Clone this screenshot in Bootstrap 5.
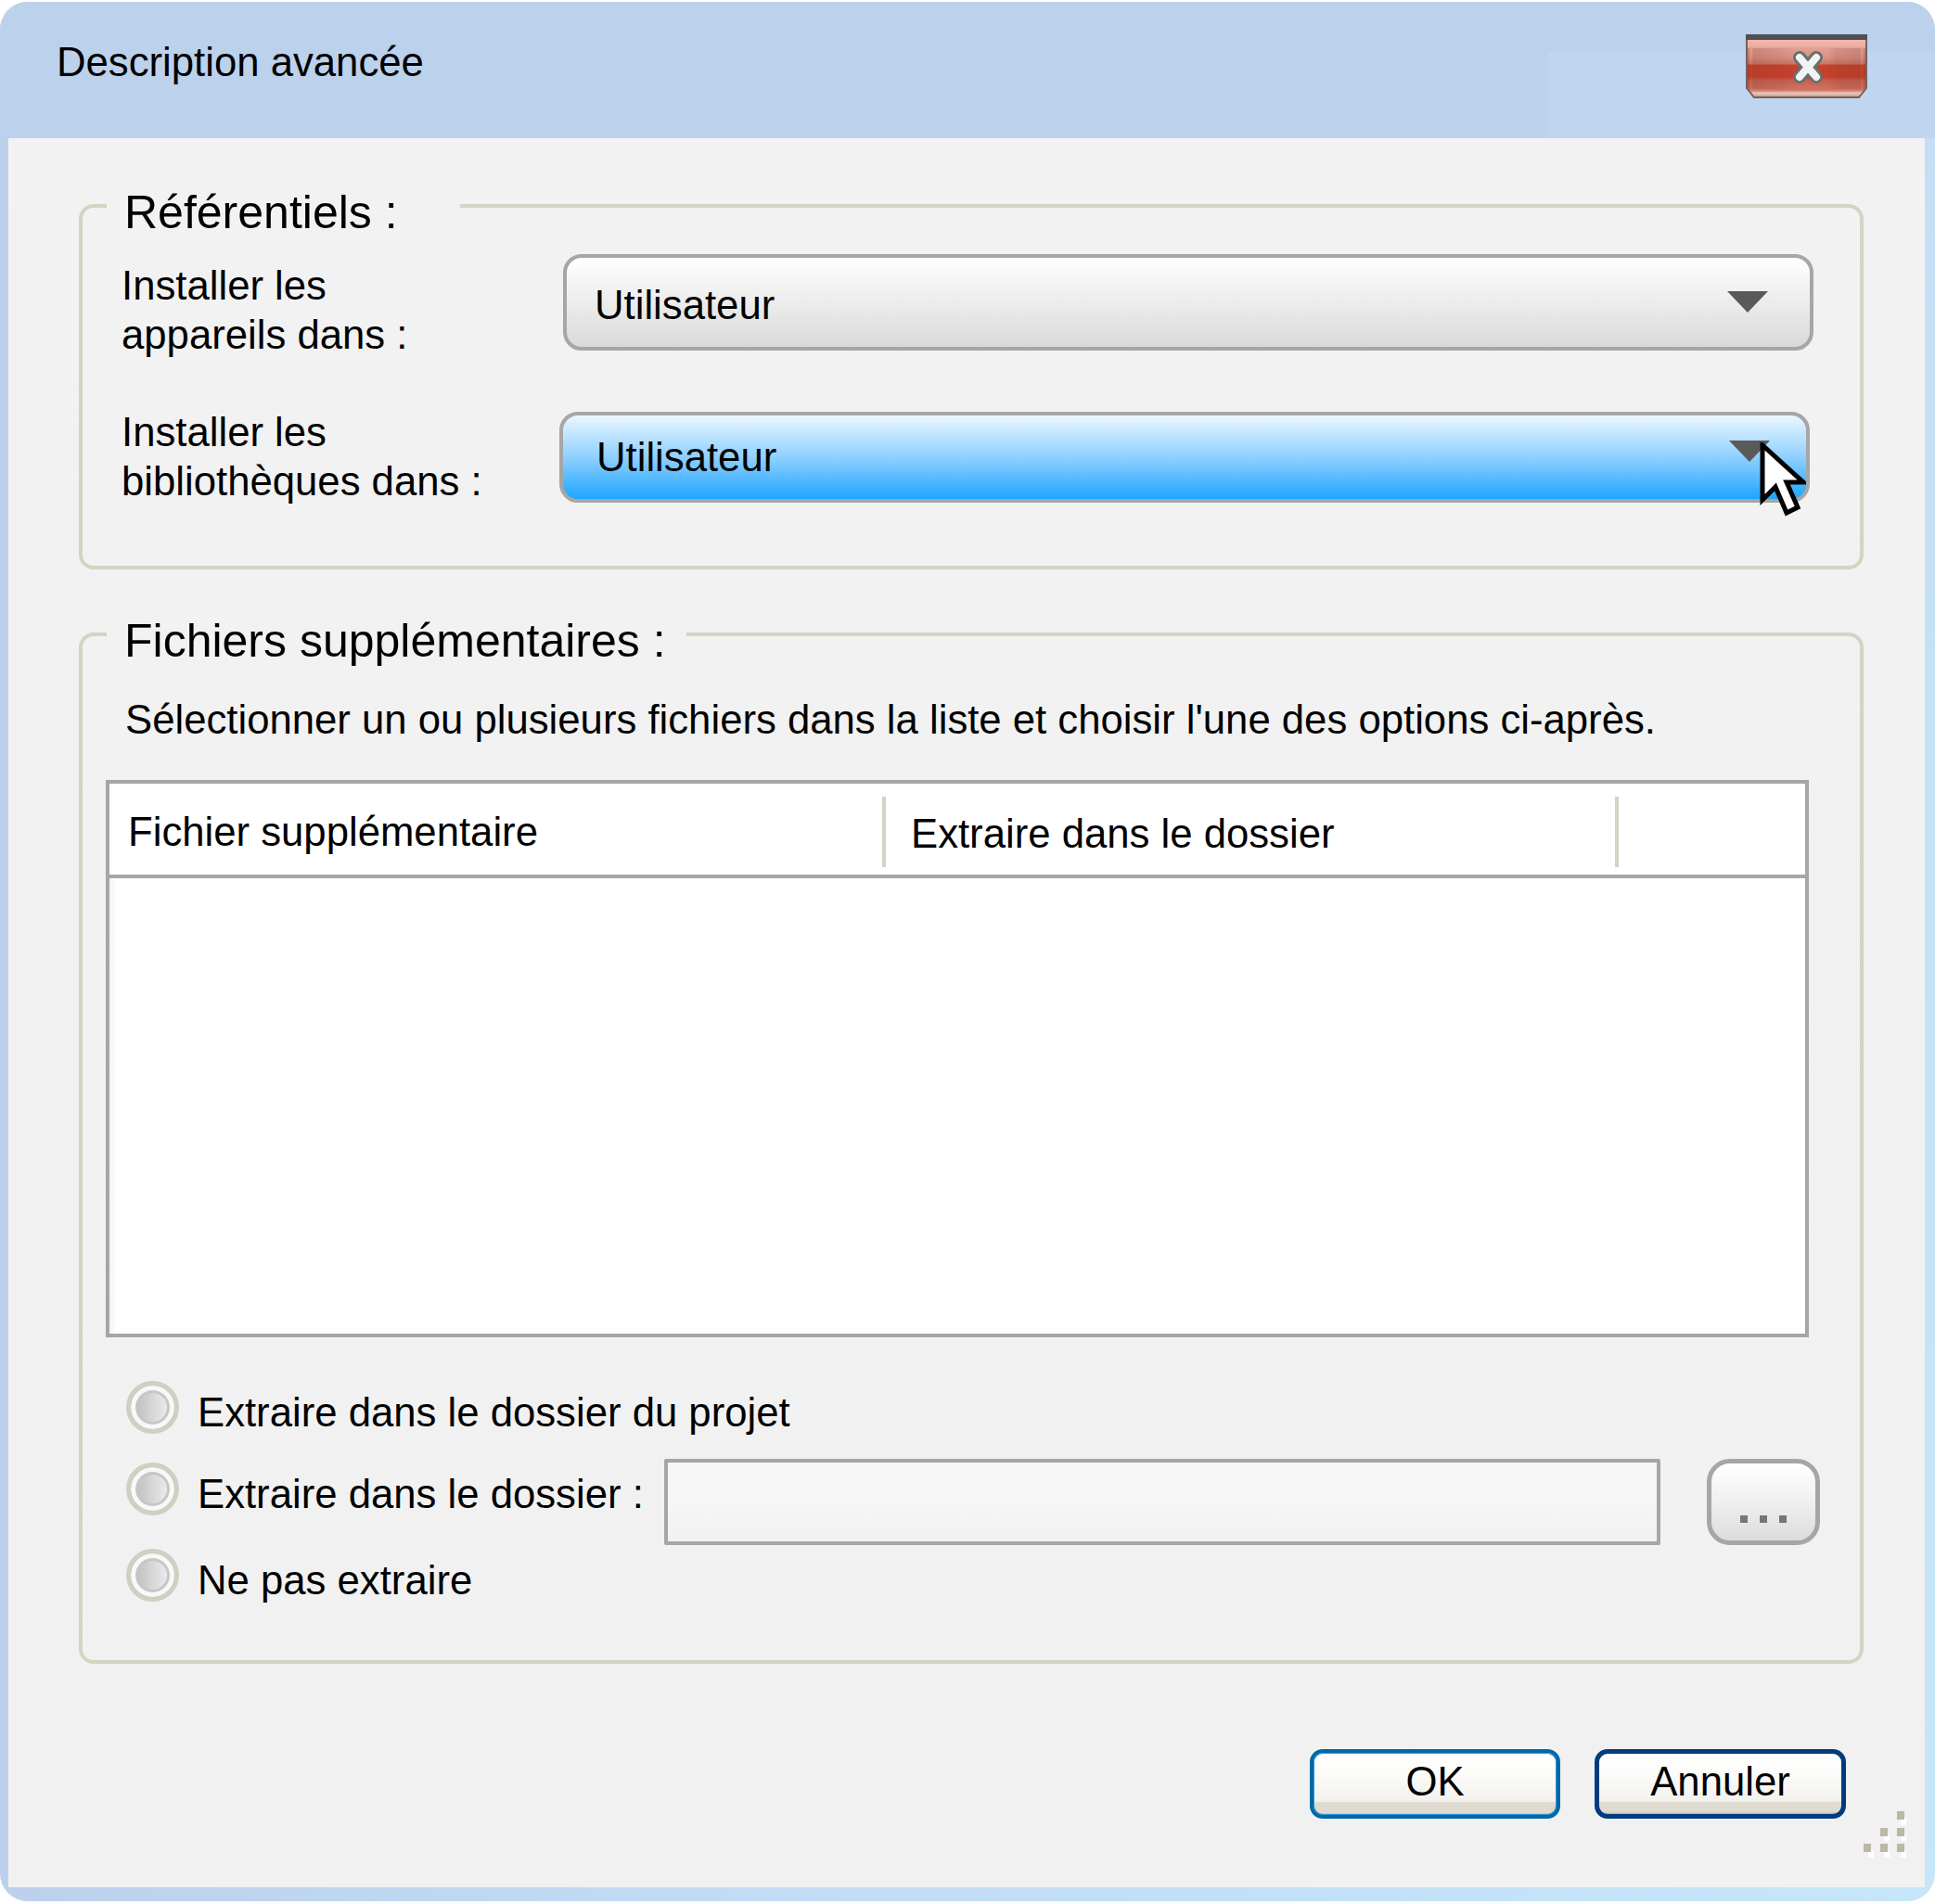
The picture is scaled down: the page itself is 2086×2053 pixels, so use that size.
<!DOCTYPE html>
<html lang="fr">
<head>
<meta charset="utf-8">
<title>Description avancée</title>
<link href="https://cdn.jsdelivr.net/npm/bootstrap@5.3.0/dist/css/bootstrap.min.css" rel="stylesheet">
<style>
html,body{margin:0;background:#fff;}
body{width:2086px;height:2053px;overflow:hidden;font-family:"Liberation Sans",Arial,sans-serif;font-size:43.7px;color:#000;padding-top:2px;}
.dlg-window{width:2086px;height:2048px;border-radius:30px;padding:0 11px 15px 9px;background:linear-gradient(115deg,#bcd0ec 31%,#c1dbf3 55%,#c6e6fa 100%);}
.dlg-title{height:147px;margin:0 -11px 0 -9px;padding:0 73px 0 61px;border-radius:30px 30px 0 0;background:linear-gradient(#bcd1ec,#bcd1ec) top/100% 53px no-repeat,linear-gradient(90deg,#bcd1ec 1668px,#c0d5ef 1668px);}
.dlg-title-text{line-height:1;font-size:43.7px;margin-top:43px;}
.dlg-close{margin-top:35px;width:131px;height:69px;display:block;}
.dlg-body{height:1886px;background:linear-gradient(#f2f2f2,#f1f1f1);padding:43px 66px 0 76px;position:relative;}
.dlg-group{border:4px solid #d3d4c2;border-radius:16px;margin:0;min-width:0;}
.dlg-group legend{float:none;width:auto;font-size:50px;line-height:74px;height:60px;padding:0 20px;margin:0;}
.grp-repo{height:422px;padding:0 50px 0 42px;margin-bottom:40px;}
.grp-repo legend{margin-left:-16px;padding:0 67px 0 19px;}
.grp-files{height:1140px;padding:0 0 0 25px;margin-top:0;}
.grp-files legend{margin-left:1px;padding:0 22px 0 19px;}
.repo-label{line-height:53px;}
.repo-row-a{padding-top:2px;height:187px;}
.repo-row-b{height:106px;}
.repo-label-a{width:476px;margin-top:27px;flex:0 0 476px;}
.repo-label-a + .dlg-select{margin-top:20px;}
.repo-label-b{width:472px;flex:0 0 472px;}
.dlg-select{border:4px solid #a6a6a6;color:#000;font-size:43.7px;display:flex;align-items:center;justify-content:space-between;width:1348px;padding:0 45px 0 30px;position:relative;text-align:left;}
.dlg-select:hover,.dlg-select:active{color:#000;}
.sel-plain{height:104px;width:1350px;border-radius:20px;background:linear-gradient(#ffffff,#f2f2f2 35%,#d9d9d9);}
.sel-hot{height:98px;border-radius:20px;background:linear-gradient(#ebf7ff,#8fd0ff 50%,#1ea5ff);margin-top:5px;padding:0 39px 0 36px;}
.sel-hot:hover,.sel-hot:active,.sel-plain:hover,.sel-plain:active{border-color:#a6a6a6;}
.sel-hot:hover{background:linear-gradient(#ebf7ff,#8fd0ff 50%,#1ea5ff);}
.sel-plain:hover{background:linear-gradient(#ffffff,#f2f2f2 35%,#d9d9d9);}
.sel-arrow{width:44px;height:23px;display:block;}
.sel-plain .sel-text{margin-top:5px;}
.sel-hot .sel-text{margin-top:0;}
.sel-plain .sel-arrow{margin-top:-1px;}
.sel-hot .sel-arrow{margin-top:-14px;}
.dlg-cursor{position:absolute;left:1290px;top:29px;width:50px;height:84px;}
.files-intro{padding-left:21px;line-height:53px;margin:0;}
.files-intro-wrap{height:127px;padding-top:35px;}
.dlg-table{width:1836px;height:601px;border:4px solid #a6a6a6;background:#fff;margin:0;table-layout:fixed;border-collapse:separate;border-spacing:0;--bs-table-bg:#fff;--bs-table-color:#000;color:#000;}
.dlg-table th{height:102px;padding:0;font-weight:400;font-size:43.7px;border-bottom:4px solid #a6a6a6;vertical-align:top;color:#000;}
.dlg-table td{border:0;padding:0;background:linear-gradient(90deg,#f3f3f3,#fff 8px);box-shadow:none;}
.col-file{width:837px;}
.col-dest{width:790px;}
.th-inner{display:flex;align-items:center;height:76px;margin-top:14px;}
.th-sep{border-right:4px solid #d3d4c2;}
.th-file{padding-left:20px;}
.th-dest{padding-left:27px;padding-top:3px;}
.radio-stack{margin-top:48px;padding-left:0;}
.dlg-radio.form-check-input{width:57px;height:57px;flex:0 0 57px;margin:-1px 20px 0 0;border:5px solid #d1cec2;border-radius:50%;background:linear-gradient(90deg,#b9b9b9,#f5f5f5);box-shadow:inset 0 0 0 5px #f8f8f8,inset 0 0 0 8px #c6c6c6;float:none;}
.radio-row-0{padding-left:22px;height:57px;}
.radio-row-1{padding-left:22px;height:93px;margin-top:27px;}
.radio-row-2{padding-left:22px;height:57px;margin-top:4px;}
.radio-row-1 .dlg-radio.form-check-input{margin-top:3px;}
.radio-text{line-height:53px;margin:6px 0 0;}
.radio-row-1 .radio-text{margin-top:10px;width:503px;flex:0 0 503px;}
.dlg-input.form-control{width:1074px;height:93px;margin-top:-1px;border:4px solid #a6a6a6;border-radius:2px;background:linear-gradient(#f7f7f7,#f6f6f6 50%,#f1f1f1);}
.dlg-browse{width:122px;height:93px;margin:-1px 0 0 50px;border:5px solid #a6a6a6;border-radius:25px;background:linear-gradient(#fff,#eee 55%,#dcdcdc);padding:0;display:flex;justify-content:center;gap:13px;align-items:flex-end;padding-bottom:19px;}
.dlg-browse:hover,.dlg-browse:active{border-color:#a6a6a6;background:linear-gradient(#fff,#eee 55%,#dcdcdc);}
.dot-sq{width:8px;height:8px;background:#7d7373;display:block;}
.dlg-footer{margin-top:92px;padding-right:19px;gap:37px;}
.dlg-btn{width:271px;height:75px;padding:0 0 6px;font-size:43.7px;line-height:1;border-radius:14px;color:#000;background:linear-gradient(#ffffff 0,#fcfcfa 30%,#f2f1ed 79%,#dfdbd1 80%,#dfdbd1 96%,#b5b2a8 100%);}
.dlg-btn:hover,.dlg-btn:active{color:#000;background:linear-gradient(#ffffff 0,#fcfcfa 30%,#f2f1ed 79%,#dfdbd1 80%,#dfdbd1 96%,#b5b2a8 100%);}
.btn-ok{border:4px solid #0068a8;width:270px;box-shadow:inset 0 0 0 1px #2f95d6;}
.btn-ok:hover,.btn-ok:active{border-color:#0068a8;}
.btn-cancel{border:5px solid #003c7e;}
.btn-cancel:hover,.btn-cancel:active{border-color:#003c7e;}
.dlg-grip{position:absolute;right:20px;bottom:32px;width:46px;height:50px;display:block;}
</style>
</head>
<body>
<div class="dlg-window">
  <div class="dlg-title d-flex justify-content-between align-items-start">
    <div class="dlg-title-text">Description avancée</div>
    <svg class="dlg-close" viewBox="0 0 131 69" aria-label="Fermer">
      <defs>
        <linearGradient id="cg" x1="0" y1="0" x2="0" y2="1">
          <stop offset="0" stop-color="#f3b9af"/><stop offset=".14" stop-color="#eeb0a5"/><stop offset=".18" stop-color="#e3a196"/><stop offset=".34" stop-color="#de9083"/><stop offset=".44" stop-color="#c9796a"/><stop offset=".47" stop-color="#c7402b"/><stop offset=".66" stop-color="#c7402b"/><stop offset=".72" stop-color="#c9604e"/><stop offset=".88" stop-color="#d07363"/><stop offset=".93" stop-color="#e7c6bb"/><stop offset="1" stop-color="#c98f85"/>
        </linearGradient>
        <linearGradient id="cs" x1="0" y1="0" x2="1" y2="0">
          <stop offset="0" stop-color="#5a2a22" stop-opacity=".3"/><stop offset=".03" stop-color="#5a2a22" stop-opacity="0"/><stop offset=".05" stop-color="#7a3a2e" stop-opacity=".22"/><stop offset=".3" stop-color="#7a3a2e" stop-opacity=".1"/><stop offset=".42" stop-color="#7a3a2e" stop-opacity="0"/><stop offset=".68" stop-color="#7a3a2e" stop-opacity="0"/><stop offset=".75" stop-color="#7a3a2e" stop-opacity=".14"/><stop offset=".95" stop-color="#7a3a2e" stop-opacity=".22"/><stop offset=".97" stop-color="#5a2a22" stop-opacity="0"/><stop offset="1" stop-color="#5a2a22" stop-opacity=".3"/>
        </linearGradient>
      </defs>
      <path d="M1 3H130V58L122 68H9L1 58Z" fill="url(#cg)"/>
      <rect x="2" y="15" width="127" height="44" fill="url(#cs)"/>
      <path d="M1 3H130V58L122 68H9L1 58Z" fill="none" stroke="#75625f" stroke-width="2"/>
      <rect x="0" y="0" width="131" height="6" fill="#4e5154"/>
      <path d="M58 25L76 46M76 25L58 46" stroke="#67706f" stroke-width="14" stroke-linecap="round" fill="none"/>
      <path d="M58 25L76 46M76 25L58 46" stroke="#f2f4f4" stroke-width="8" stroke-linecap="round" fill="none"/>
    </svg>
  </div>
  <div class="dlg-body">
    <fieldset class="dlg-group grp-repo">
      <legend>Référentiels :</legend>
      <div class="d-flex align-items-start repo-row-a">
        <div class="repo-label repo-label-a">Installer les<br>appareils dans :</div>
        <button type="button" class="btn dlg-select sel-plain"><span class="sel-text">Utilisateur</span><svg class="sel-arrow" viewBox="0 0 44 23"><path d="M0 0H44L22 23Z" fill="#5a5a5a"/></svg></button>
      </div>
      <div class="d-flex align-items-start repo-row-b">
        <div class="repo-label repo-label-b">Installer les<br>bibliothèques dans :</div>
        <button type="button" class="btn dlg-select sel-hot"><span class="sel-text">Utilisateur</span><svg class="sel-arrow" viewBox="0 0 44 23"><path d="M0 0H44L22 23Z" fill="#5a5a5a"/></svg>
          <svg class="dlg-cursor" viewBox="0 0 50 84"><path d="M3 3V62L17 48L29 76L41 70L29 43H47Z" fill="#fff" stroke="#000" stroke-width="5" stroke-linejoin="miter"/></svg>
        </button>
      </div>
    </fieldset>
    <fieldset class="dlg-group grp-files">
      <legend>Fichiers supplémentaires :</legend>
      <div class="files-intro-wrap"><p class="files-intro">Sélectionner un ou plusieurs fichiers dans la liste et choisir l'une des options ci-après.</p></div>
      <table class="table dlg-table">
        <colgroup><col class="col-file"><col class="col-dest"><col></colgroup>
        <thead>
          <tr>
            <th><div class="th-inner th-sep th-file">Fichier supplémentaire</div></th>
            <th><div class="th-inner th-sep th-dest">Extraire dans le dossier</div></th>
            <th></th>
          </tr>
        </thead>
        <tbody><tr><td colspan="3"></td></tr></tbody>
      </table>
      <div class="radio-stack">
        <div class="d-flex align-items-start radio-row-0">
          <input class="form-check-input dlg-radio" type="radio" name="dest" id="r1">
          <label class="radio-text" for="r1">Extraire dans le dossier du projet</label>
        </div>
        <div class="d-flex align-items-start radio-row-1">
          <input class="form-check-input dlg-radio" type="radio" name="dest" id="r2">
          <label class="radio-text" for="r2">Extraire dans le dossier :</label>
          <input class="form-control dlg-input" type="text" aria-label="Dossier">
          <button type="button" class="btn dlg-browse" aria-label="Parcourir"><span class="dot-sq"></span><span class="dot-sq"></span><span class="dot-sq"></span></button>
        </div>
        <div class="d-flex align-items-start radio-row-2">
          <input class="form-check-input dlg-radio" type="radio" name="dest" id="r3">
          <label class="radio-text" for="r3">Ne pas extraire</label>
        </div>
      </div>
    </fieldset>
    <div class="d-flex justify-content-end dlg-footer">
      <button type="button" class="btn dlg-btn btn-ok">OK</button>
      <button type="button" class="btn dlg-btn btn-cancel">Annuler</button>
    </div>
    <svg class="dlg-grip" viewBox="0 0 46 50">
      <g fill="#fff"><rect x="40" y="7" width="6" height="8"/><rect x="22" y="25" width="6" height="7"/><rect x="40" y="25" width="6" height="7"/><rect x="5" y="42" width="6" height="8"/><rect x="22" y="42" width="6" height="8"/><rect x="40" y="42" width="6" height="8"/></g>
      <g fill="#bdb8a5"><rect x="36" y="0" width="8" height="9"/><rect x="18" y="18" width="8" height="9"/><rect x="36" y="18" width="8" height="9"/><rect x="0" y="35" width="8" height="9"/><rect x="18" y="35" width="8" height="9"/><rect x="36" y="35" width="8" height="9"/></g>
    </svg>
  </div>
</div>
<script src="https://cdn.jsdelivr.net/npm/bootstrap@5.3.0/dist/js/bootstrap.bundle.min.js"></script>
</body>
</html>
